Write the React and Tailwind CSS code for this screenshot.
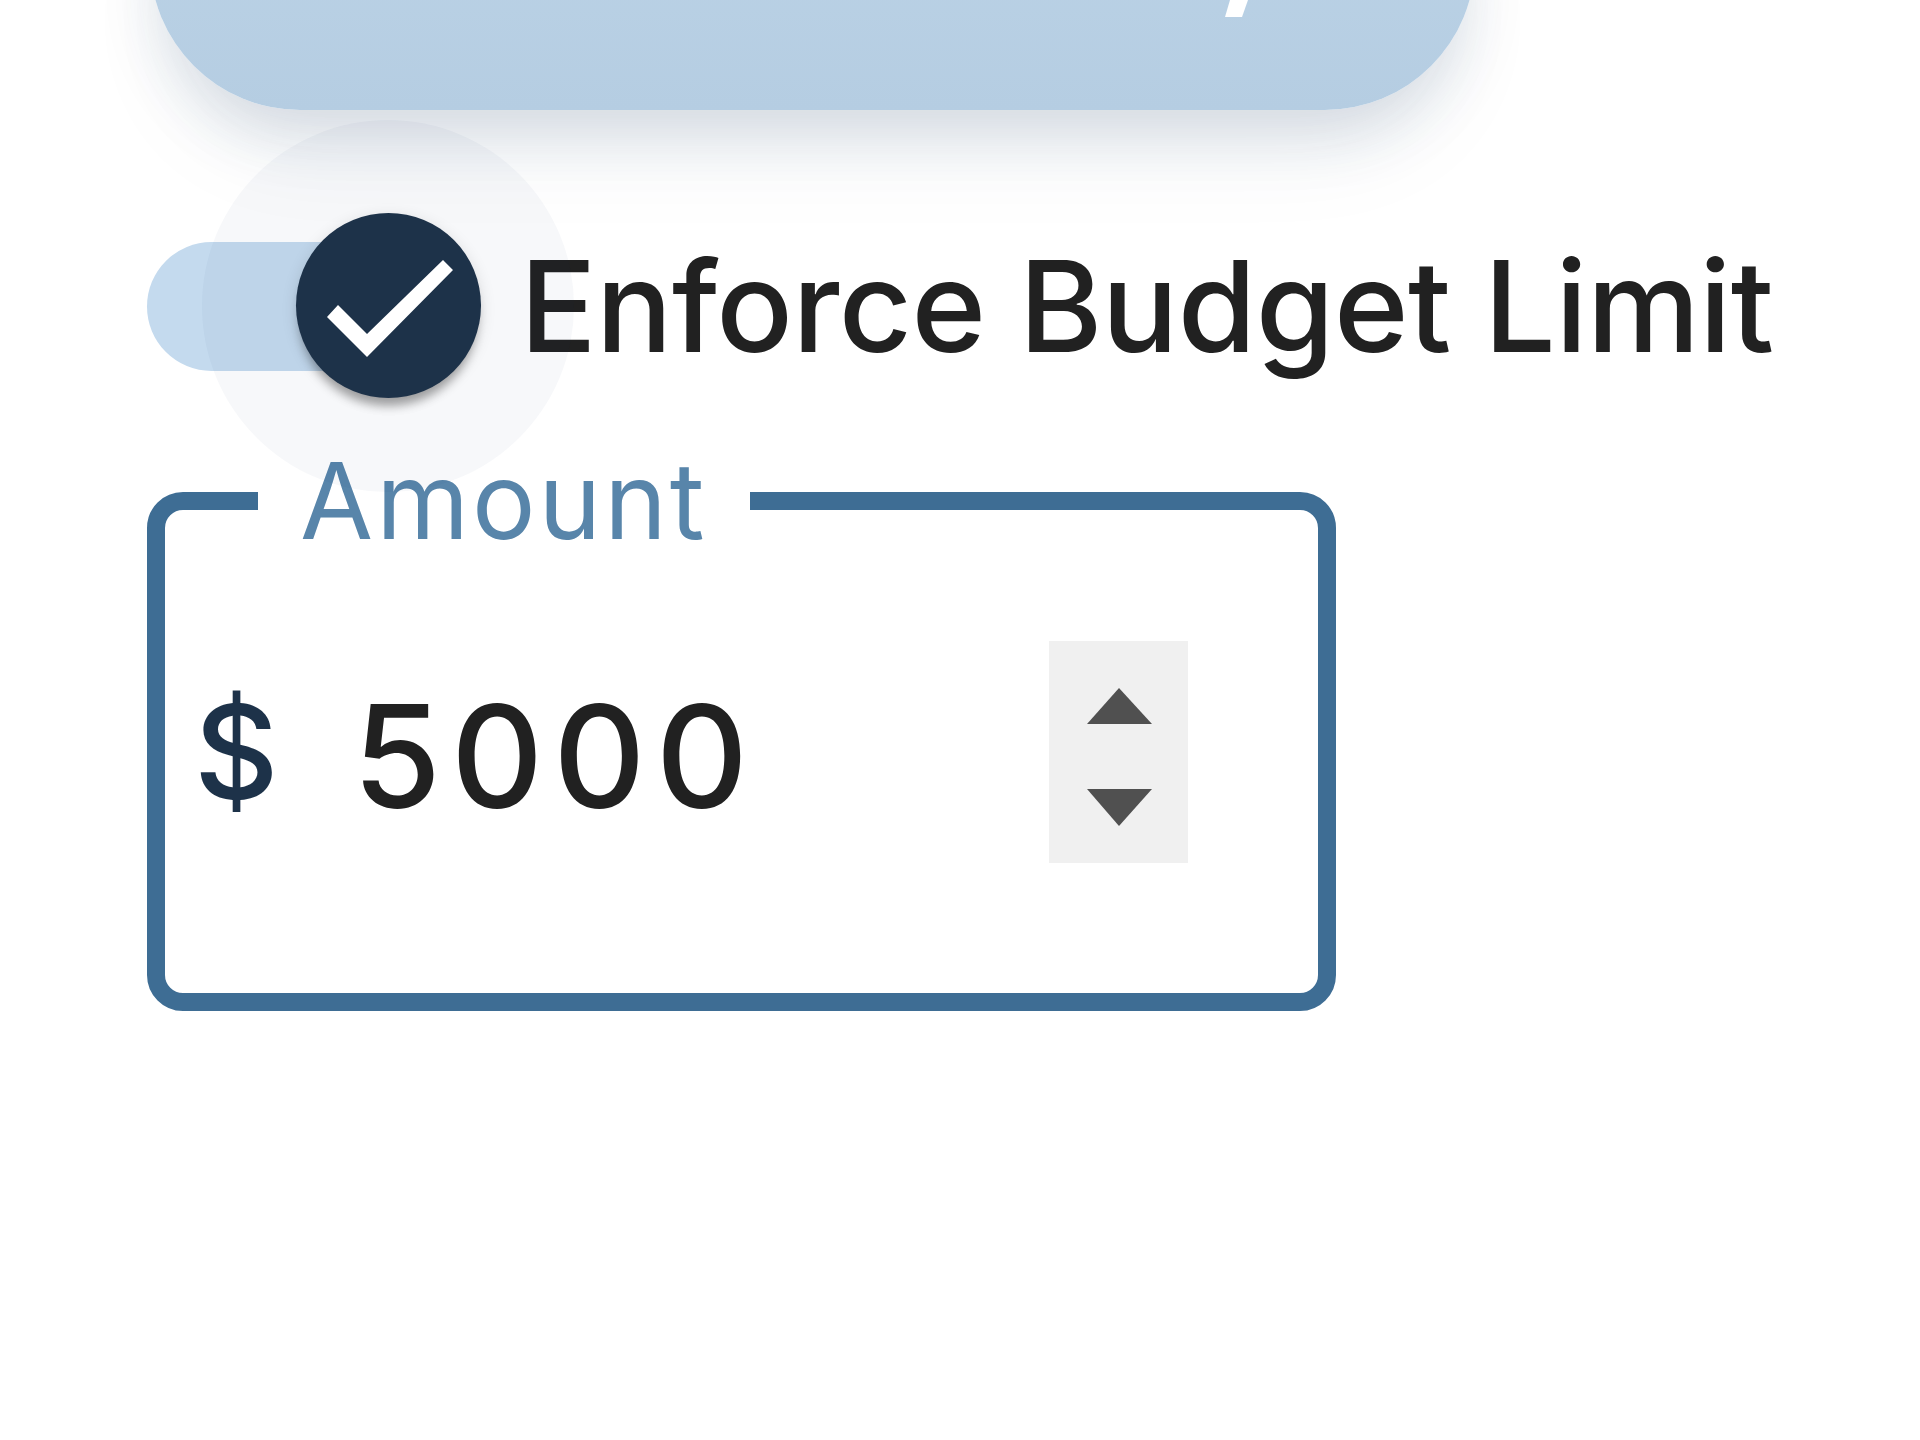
import React from 'react';

const font = { fontFamily: 'Inter, "Noto Sans", sans-serif' };

const CheckMark = () => (
    <svg viewBox="0 0 185 185" className="w-full h-full">
        <polygon points="31,104 42,92 71,121 147,47 157,57 71,144" fill="#ffffff" />
    </svg>
);

const Spinner = () => (
    <div className="w-[139px] h-[222px] bg-[#f0f0f0] shrink-0">
        <svg viewBox="0 0 139 222" className="w-full h-full">
            <polygon points="70,47 38,83 103,83" fill="#505050" />
            <polygon points="38,148 103,148 70,185" fill="#505050" />
        </svg>
    </div>
);

const App = () => {
    return (
        <div className="min-h-screen w-full bg-white overflow-hidden pl-[147px]" style={font}>
            {/* header button, mostly scrolled off the top */}
            <div className="-mt-[190px] ml-[3px] h-[300px] w-[1325px] rounded-[160px] bg-gradient-to-b from-[#bed5e8] to-[#b5cde2] shadow-[0_34px_60px_-10px_rgba(30,60,100,0.15),0_60px_100px_-20px_rgba(30,60,100,0.06)] flex items-start pt-[190px] pl-[1075px]">
                <svg viewBox="0 0 23 17" className="w-[23px] h-[17px]">
                    <polygon points="5,0 23,0 17,17 0,17" fill="#ffffff" />
                </svg>
            </div>

            {/* switch + label */}
            <div className="mt-[132px] flex items-center">
                <div className="relative w-[305px] h-[129px] rounded-full bg-[#c4daee] shrink-0">
                    <div className="absolute left-[55px] -top-[122px] w-[372px] h-[372px] rounded-full bg-[rgba(30,60,100,0.035)]" />
                    <div className="absolute left-[149px] -top-[29px] w-[185px] h-[185px] rounded-full bg-[#1d3249] shadow-[0_12px_10px_-4px_rgba(0,0,0,0.3),0_4px_16px_rgba(0,0,0,0.12)]">
                        <CheckMark />
                    </div>
                </div>
                <span className="ml-[68px] text-[127px] font-medium leading-none tracking-[-0.5px] text-[#212121] whitespace-nowrap">
                    Enforce Budget Limit
                </span>
            </div>

            {/* outlined amount field */}
            <fieldset className="mt-[77px] w-[1189px] border-[18px] border-[#3e6d94] rounded-[36px] pb-[44px]">
                <legend className="ml-[93px] px-[42px] text-[106px] leading-none tracking-[3px] text-[#5885aa]">Amount</legend>
                <div className="h-[395px] flex items-center pl-[29px] pr-[130px]">
                    <span className="text-[131px] font-medium leading-none text-[#1d3249]">$</span>
                    <span className="ml-[74px] pt-[8px] text-[143px] font-medium leading-none tracking-[10px] text-[#212121]">5000</span>
                    <div className="flex-1" />
                    <Spinner />
                </div>
            </fieldset>
        </div>
    );
};

export default App;
